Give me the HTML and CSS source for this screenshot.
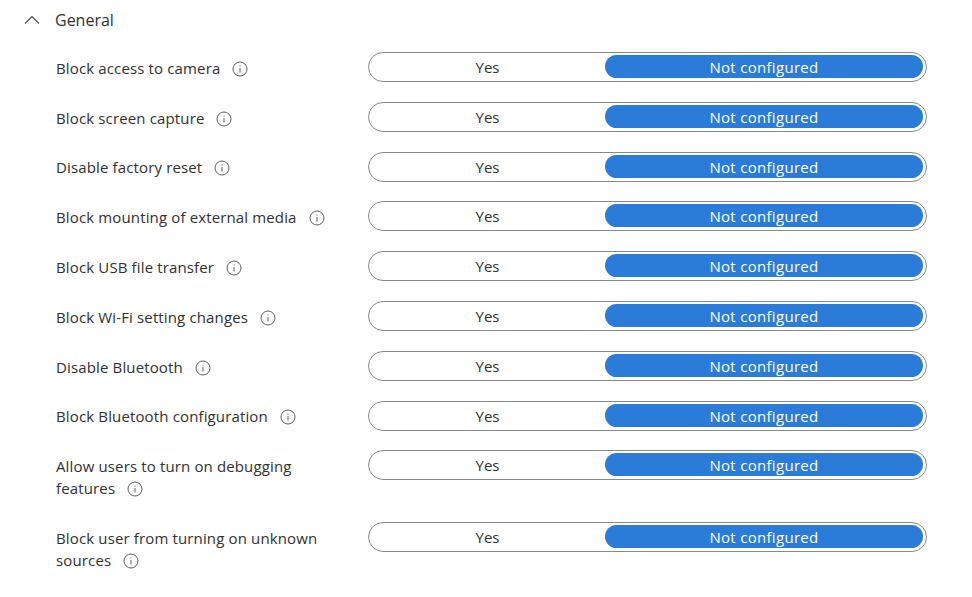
FILE: index.html
```html
<!DOCTYPE html>
<html lang="en">
<head>
<meta charset="utf-8">
<title>General</title>
<link rel="stylesheet" href="styles.css">
</head>
<body>
<svg width="0" height="0" class="defs">
  <symbol id="info" viewBox="0 0 16 16">
    <circle cx="8" cy="8" r="7" fill="none" stroke="#605e5c" stroke-width="1"/>
    <path d="M8 7v4.5" stroke="#605e5c" stroke-width="1" fill="none"/>
    <rect x="7.5" y="4.5" width="1" height="1" fill="#605e5c"/>
  </symbol>
</svg>
<main class="section">
  <header class="section-head">
    <svg class="chevron" width="16" height="10" viewBox="0 0 16 10"><path d="M1 8.5 8 1.5l7 7" fill="none" stroke="#484644" stroke-width="1.1"/></svg>
    <span>General</span>
  </header>
  <div class="rows">
    <div class="row"><div class="label">Block access to camera<svg class="info"><use href="#info"/></svg></div><div class="toggle"><span class="opt yes">Yes</span><span class="opt on">Not configured</span></div></div>
    <div class="row"><div class="label">Block screen capture<svg class="info"><use href="#info"/></svg></div><div class="toggle"><span class="opt yes">Yes</span><span class="opt on">Not configured</span></div></div>
    <div class="row"><div class="label">Disable factory reset<svg class="info"><use href="#info"/></svg></div><div class="toggle"><span class="opt yes">Yes</span><span class="opt on">Not configured</span></div></div>
    <div class="row"><div class="label">Block mounting of external media<svg class="info"><use href="#info"/></svg></div><div class="toggle"><span class="opt yes">Yes</span><span class="opt on">Not configured</span></div></div>
    <div class="row"><div class="label">Block USB file transfer<svg class="info"><use href="#info"/></svg></div><div class="toggle"><span class="opt yes">Yes</span><span class="opt on">Not configured</span></div></div>
    <div class="row"><div class="label">Block Wi-Fi setting changes<svg class="info"><use href="#info"/></svg></div><div class="toggle"><span class="opt yes">Yes</span><span class="opt on">Not configured</span></div></div>
    <div class="row"><div class="label">Disable Bluetooth<svg class="info"><use href="#info"/></svg></div><div class="toggle"><span class="opt yes">Yes</span><span class="opt on">Not configured</span></div></div>
    <div class="row"><div class="label">Block Bluetooth configuration<svg class="info"><use href="#info"/></svg></div><div class="toggle"><span class="opt yes">Yes</span><span class="opt on">Not configured</span></div></div>
    <div class="row"><div class="label">Allow users to turn on debugging features<svg class="info"><use href="#info"/></svg></div><div class="toggle"><span class="opt yes">Yes</span><span class="opt on">Not configured</span></div></div>
    <div class="row"><div class="label">Block user from turning on unknown sources<svg class="info"><use href="#info"/></svg></div><div class="toggle"><span class="opt yes">Yes</span><span class="opt on">Not configured</span></div></div>
  </div>
</main>
</body>
</html>
```
FILE: styles.css
```css
html, body {
  margin: 0;
  padding: 0;
  background: #fff;
}
body {
  font-family: "Open Sans", "Noto Sans", "Liberation Sans", sans-serif;
  font-size: 15px;
  color: #323130;
  overflow: hidden;
}
.defs {
  display: block;
  height: 0;
}
.section {
  padding: 8px 45px 0 24px;
}
.section-head {
  display: flex;
  align-items: center;
  height: 24px;
  font-size: 16px;
}
.chevron {
  width: 16px;
  margin-right: 15px;
}
.rows {
  display: flex;
  flex-direction: column;
  gap: 19.8px;
  margin-top: 20px;
  padding-left: 32px;
}
.row {
  display: grid;
  grid-template-columns: 312px 559px;
  align-items: start;
}
.row:nth-child(9) {
  margin-bottom: 3.2px;
}
.label {
  line-height: 22px;
  padding-top: 4.8px;
  width: 270px;
  letter-spacing: 0.14px;
}
.info {
  width: 16px;
  height: 16px;
  margin-left: 12px;
  vertical-align: -3px;
}
.toggle {
  box-sizing: border-box;
  height: 30px;
  border: 1px solid #8a8886;
  border-radius: 15px;
  padding: 2px 3px;
  display: grid;
  grid-template-columns: 233px 318px;
}
.opt {
  text-align: center;
  letter-spacing: 0.3px;
  line-height: 24.5px;
  height: 23px;
  border-radius: 12px;
}
.yes {
  padding-right: 2px;
  letter-spacing: 0;
}
.on {
  background: #2b7cd9;
  color: #fff;
}
```
